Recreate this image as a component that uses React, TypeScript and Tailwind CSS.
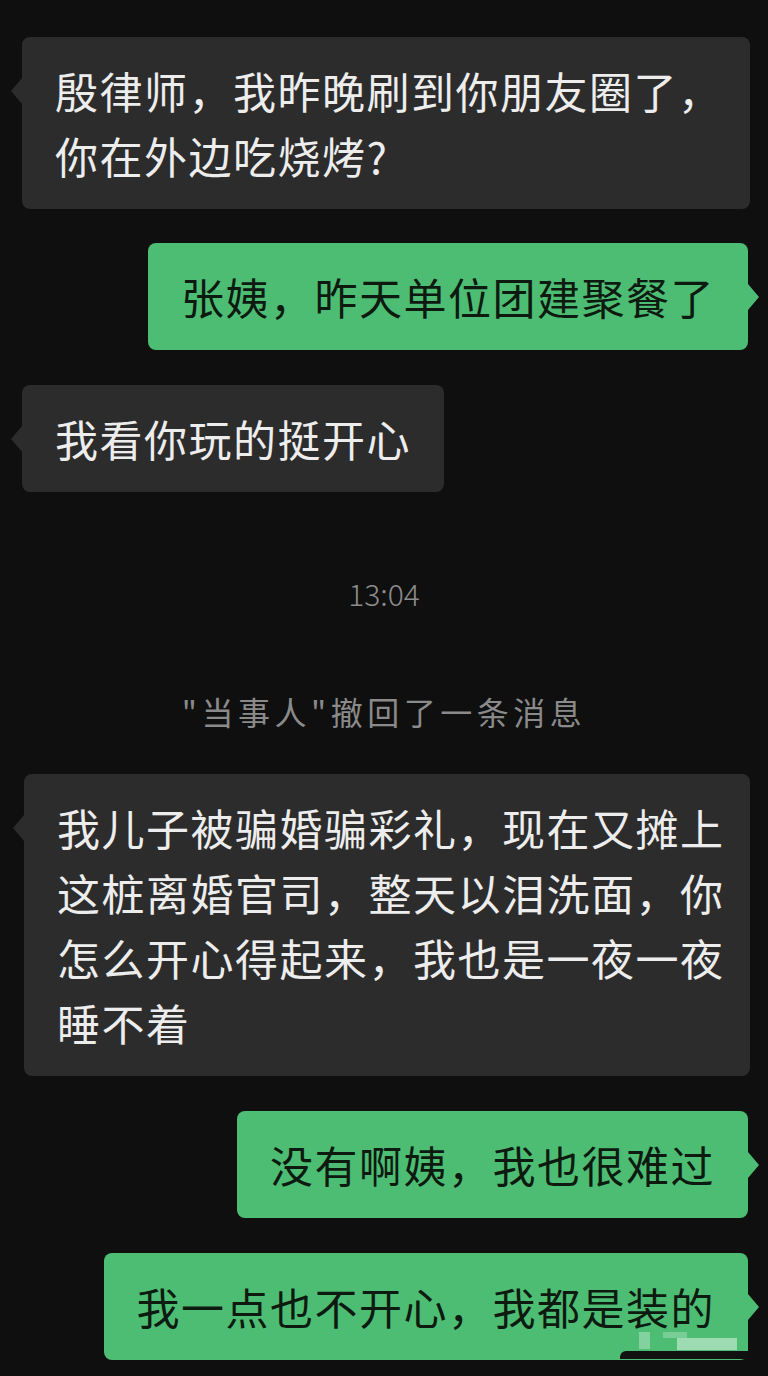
import * as React from 'react';

type Side = 'left' | 'right';

function Bubble({
  side,
  className = '',
  children,
}: {
  side: Side;
  className?: string;
  children: React.ReactNode;
}) {
  const isLeft = side === 'left';
  return (
    <div
      className={
        'relative rounded-[8px] py-[21px] text-[43px] leading-[65px] tracking-[1.5px] ' +
        (isLeft
          ? 'self-start bg-[#2c2c2c] text-[#ededed] '
          : 'self-end mr-[20px] bg-[#4dbd74] text-[#0d1a10] ') +
        className
      }
    >
      {isLeft ? (
        <span className="absolute -left-[11px] top-[41px] h-0 w-0 border-y-[13px] border-r-[11px] border-y-transparent border-r-[#2c2c2c]" />
      ) : (
        <span className="absolute -right-[11px] top-[41px] h-0 w-0 border-y-[13px] border-l-[11px] border-y-transparent border-l-[#4dbd74]" />
      )}
      {children}
    </div>
  );
}

export default function App() {
  return (
    <div
      className="flex min-h-[1376px] w-[768px] flex-col bg-[#0f0f0f] pt-[37px]"
      style={{ fontFamily: '"Noto Sans CJK SC", "Noto Sans", sans-serif' }}
    >
      <Bubble side="left" className="ml-[22px] w-[728px] pl-[33px] pr-[22px]">
        殷律师，我昨晚刷到你朋友圈了，你在外边吃烧烤?
      </Bubble>

      <Bubble side="right" className="mt-[34px] px-[33px]">
        张姨，昨天单位团建聚餐了
      </Bubble>

      <Bubble side="left" className="ml-[22px] mt-[35px] px-[33px]">
        我看你玩的挺开心
      </Bubble>

      <div className="mt-[81px] text-center text-[30px] font-light leading-[40px] text-[#8c8c8c]">
        13:04
      </div>

      <div className="mt-[78px] text-center text-[32px] leading-[40px] tracking-[4.5px] text-[#8a8a8a]">
        "当事人"撤回了一条消息
      </div>

      <Bubble side="left" className="ml-[24px] mt-[43px] w-[726px] pl-[33px] pr-[20px]">
        我儿子被骗婚骗彩礼，现在又摊上这桩离婚官司，整天以泪洗面，你怎么开心得起来，我也是一夜一夜睡不着
      </Bubble>

      <Bubble side="right" className="mt-[35px] px-[33px]">
        没有啊姨，我也很难过
      </Bubble>

      <Bubble side="right" className="mt-[35px] px-[33px]">
        我一点也不开心，我都是装的
        {/* blurred watermark */}
        <span className="absolute left-[535px] top-[79px] h-[17px] w-[11px] bg-white/30" />
        <span className="absolute left-[559px] top-[79px] h-[6px] w-[24px] bg-white/25" />
        <span className="absolute left-[573px] top-[85px] h-[12px] w-[60px] bg-white/45" />
        <span className="absolute left-[516px] top-[98px] h-[8px] w-[128px] rounded-tl-[6px] bg-[#111]" />
      </Bubble>
    </div>
  );
}
